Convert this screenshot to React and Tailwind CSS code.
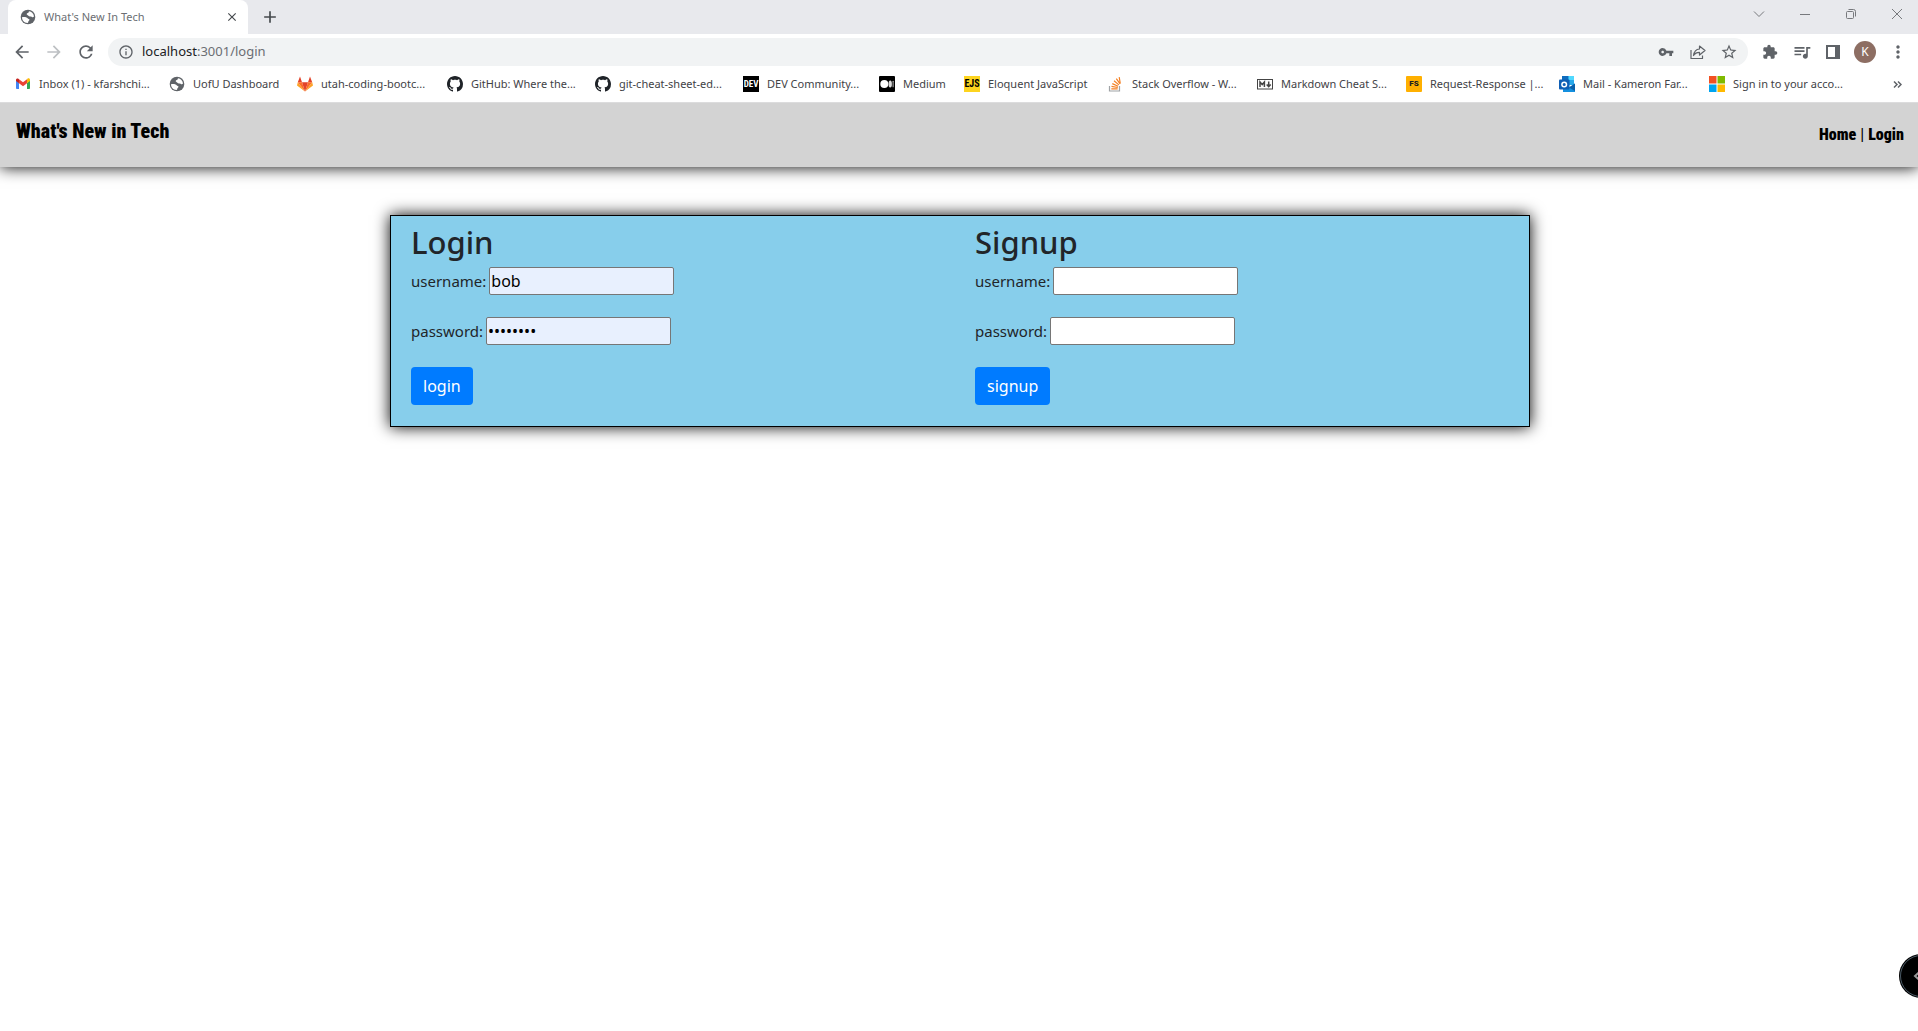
import React from "react";
import {
  MdArrowBack, MdArrowForward, MdRefresh, MdInfoOutline, MdVpnKey,
  MdStarBorder, MdExtension, MdQueueMusic, MdMoreVert, MdClose, MdAdd,
} from "react-icons/md";

const ICON = "size-4 shrink-0";

const Gmail = () => (
  <svg className={ICON} viewBox="0 0 16 16" aria-hidden="true">
    <path d="M1 4v8.200c0 .5.4.8.8.8H4V7z" fill="#4285f4" />
    <path d="M15 4v8.200c0 .5-.4.8-.8.8H12V7z" fill="#34a853" />
    <path d="M12 3.400V7.200l3-2.200V3.800c0-1.300-1.400-2-2.400-1.200z" fill="#fbbc04" />
    <path d="M4 7.200V3.200l4 3 4-3v4L8 10.200z" fill="#ea4335" />
    <path d="M1 3.800V5l3 2.200V3.200l-.6-.5C2.400 2 1 2.600 1 3.800z" fill="#c5221f" />
  </svg>
);
const Globe = () => (
  <svg className={ICON} viewBox="0 0 16 16" aria-hidden="true">
    <circle cx="8" cy="8" r="7.300" fill="#5f6368" />
    <path d="M9 2.200c2.700.4 4.700 2.500 5 5.300-.6.900-1.500 1-2.200.4-.5-.5-1.200-.4-1.900-.4-1.200 0-1.500-.8-2.200-1.200-.8-.4-1.300-1-.8-1.700.4-.6 1.400-.3 1.700-1 .2-.5 0-1 .4-1.400z" fill="#fff" />
    <path d="M2 8.200c1.500-.2 3.200-.2 4.500.3 1 .4 1.300 1.300 2.300 1.500.8.200.9 1 .3 1.500-.6.400-.9 1-.9 1.700 0 .4-.3.800-.8.800C4.300 13.700 2 11.400 2 8.200z" fill="#fff" />
  </svg>
);
const Gitlab = () => (
  <svg className={ICON} viewBox="0 0 16 16" aria-hidden="true">
    <path d="M5 6.300 3 .5.800 6.300zM11 6.300l2-5.800 2.200 5.800z" fill="#e24329" />
    <path d="M.8 6.300 0 9.500l8 6zM15.200 6.300 16 9.500l-8 6z" fill="#fca326" />
    <path d="M.8 6.300H5l3 9.200zM15.200 6.300H11l-3 9.200z" fill="#fc6d26" />
    <path d="M5 6.300h6l-3 9.200z" fill="#e24329" />
  </svg>
);
const Github = () => (
  <svg className={ICON} viewBox="0 0 16 16" fill="#1f2328" aria-hidden="true">
    <path d="M8 0C3.58 0 0 3.58 0 8c0 3.54 2.29 6.53 5.47 7.59.4.07.55-.17.55-.38 0-.19-.01-.82-.01-1.490-2.010.37-2.530-.49-2.690-.94-.09-.23-.48-.94-.82-1.130-.28-.15-.68-.52-.01-.53.63-.01 1.080.58 1.230.82.72 1.210 1.870.87 2.330.66.07-.52.28-.87.51-1.070-1.780-.2-3.640-.89-3.640-3.950 0-.87.31-1.590.82-2.150-.08-.2-.36-1.020.08-2.120 0 0 .67-.21 2.200.82.64-.18 1.320-.27 2-.27s1.360.09 2 .27c1.530-1.040 2.200-.82 2.200-.82.44 1.100.16 1.920.08 2.120.51.56.82 1.270.82 2.150 0 3.070-1.870 3.750-3.650 3.950.29.25.54.73.54 1.480 0 1.070-.01 1.930-.01 2.200 0 .21.15.46.55.38A8.010 8.010 0 0 0 16 8c0-4.420-3.580-8-8-8z" />
  </svg>
);
const Dev = () => (
  <span className="flex size-4 shrink-0 items-center justify-center bg-black font-['Liberation_Sans_Narrow','Roboto_Condensed','Roboto'] text-[9px] leading-none font-bold text-white">DEV</span>
);
const Medium = () => (
  <svg className={ICON} viewBox="0 0 16 16" aria-hidden="true">
    <rect width="16" height="16" rx="1" fill="#000" />
    <circle cx="5.300" cy="8" r="4" fill="#fff" />
    <ellipse cx="11.200" cy="8" rx="1.700" ry="3.600" fill="#ddd" />
    <rect x="13.600" y="4.800" width="1" height="6.400" rx=".5" fill="#bbb" />
  </svg>
);
const Ejs = () => (
  <span className="flex size-4 shrink-0 items-center justify-center bg-[#fdd41f] font-['Liberation_Sans_Narrow','Roboto_Condensed','Roboto'] text-[10px] leading-none font-bold text-black">EJS</span>
);
const StackOverflow = () => (
  <svg className={ICON} viewBox="0 0 16 16" fill="none" aria-hidden="true">
    <path d="M1.500 10v5h10v-5" stroke="#a0a3a6" strokeWidth="1.200" />
    <path d="M3.300 12.800h6.400M3.500 10.300l6.300 1.200M4.300 7.600l5.800 2.700M6 4.800l4.900 4.100M8.300 2.700l3.800 5.100M11.200 1.200l1.100 6.300" stroke="#f48024" strokeWidth="1.200" />
  </svg>
);
const Markdown = () => (
  <svg className={ICON} viewBox="0 0 16 16" fill="none" stroke="#444" aria-hidden="true">
    <rect x=".5" y="3.500" width="15" height="9.500" />
    <path d="M3 11V6l2.200 2.600L7.400 6v5M11.700 5.500v5M9.700 8.400l2 2.300 2-2.300" strokeWidth="1.500" />
  </svg>
);
const FullStack = () => (
  <span className="flex size-4 shrink-0 items-center justify-center rounded-[1px] bg-[#ffb000] font-['Roboto'] text-[8px] leading-none font-black text-[#222]">FS</span>
);
const Outlook = () => (
  <svg className={ICON} viewBox="0 0 16 16" aria-hidden="true">
    <path d="M3 0h12v9H3z" fill="#28a8ea" />
    <path d="M3 0h6v4H3z" fill="#0f6cbd" />
    <path d="M10 0h5v4h-5z" fill="#50d9ff" />
    <path d="M4 16h12V7.500l-6 4-6-4z" fill="#1490df" />
    <path d="M16 7.500V15l-6-3.600z" fill="#0a5ea8" />
    <rect y="3.500" width="10.500" height="10" rx="1" fill="#0f5fb5" />
    <circle cx="5.200" cy="8.500" r="2.300" fill="none" stroke="#fff" strokeWidth="1.500" />
  </svg>
);
const Microsoft = () => (
  <svg className={ICON} viewBox="0 0 16 16" aria-hidden="true">
    <path d="M0 0h7.500v7.500H0z" fill="#f25022" />
    <path d="M8.500 0H16v7.500H8.500z" fill="#7fba00" />
    <path d="M0 8.500h7.500V16H0z" fill="#00a4ef" />
    <path d="M8.500 8.500H16V16H8.500z" fill="#ffb900" />
  </svg>
);

const bookmarks = [
  { label: "Inbox (1) - kfarshchi...", icon: Gmail, width: "w-[154px]" },
  { label: "UofU Dashboard", icon: Globe, width: "w-32" },
  { label: "utah-coding-bootc...", icon: Gitlab, width: "w-[150px]" },
  { label: "GitHub: Where the...", icon: Github, width: "w-[148px]" },
  { label: "git-cheat-sheet-ed...", icon: Github, width: "w-[148px]" },
  { label: "DEV Community...", icon: Dev, width: "w-[136px]" },
  { label: "Medium", icon: Medium, width: "w-[85px]" },
  { label: "Eloquent JavaScript", icon: Ejs, width: "w-[144px]" },
  { label: "Stack Overflow - W...", icon: StackOverflow, width: "w-[149px]" },
  { label: "Markdown Cheat S...", icon: Markdown, width: "w-[149px]" },
  { label: "Request-Response |...", icon: FullStack, width: "w-[153px]" },
  { label: "Mail - Kameron Far...", icon: Outlook, width: "w-[150px]" },
  { label: "Sign in to your acco...", icon: Microsoft, width: "w-[150px]" },
];

function TabStrip() {
  return (
    <div className="flex h-[34px] bg-[#e8e9ed] pl-2">
      <div className="flex w-60 items-center rounded-t-lg bg-white pr-[9px] pl-3">
        <Globe />
        <span className="ml-2 flex-1 text-[11px] text-[#6b6e73]">What's New In Tech</span>
        <button aria-label="Close tab"><MdClose className="size-[14px] text-[#45494d]" /></button>
      </div>
      <button aria-label="New tab" className="ml-3"><MdAdd className="size-5 text-[#45494d]" /></button>
      <div className="ml-auto flex h-7 items-center gap-1 text-[#77797d]">
        <button aria-label="Search tabs" className="flex w-[42px] justify-center">
          <svg className="size-3" viewBox="0 0 12 12" fill="none" stroke="currentColor"><path d="M1 3.500l5 5 5-5" /></svg>
        </button>
        <button aria-label="Minimize" className="flex w-[42px] justify-center">
          <svg className="size-3" viewBox="0 0 12 12" stroke="currentColor"><path d="M1 6.500h10" /></svg>
        </button>
        <button aria-label="Restore" className="flex w-[42px] justify-center">
          <svg className="size-3" viewBox="0 0 12 12" fill="none" stroke="currentColor">
            <rect x="1.500" y="3.500" width="7" height="7" rx="1" />
            <path d="M3.500 1.500h5a2 2 0 0 1 2 2v5" />
          </svg>
        </button>
        <button aria-label="Close window" className="flex w-[42px] justify-center">
          <svg className="size-3" viewBox="0 0 12 12" stroke="currentColor"><path d="M1 1l10 10M11 1L1 11" /></svg>
        </button>
      </div>
    </div>
  );
}

function Toolbar() {
  return (
    <div className="flex h-9 items-center pr-[10px] pl-3 text-[#5f6368]">
      <button aria-label="Back"><MdArrowBack className="size-5" /></button>
      <button aria-label="Forward" className="ml-3 text-[#bdc0c3]"><MdArrowForward className="size-5" /></button>
      <button aria-label="Reload" className="ml-3"><MdRefresh className="size-5" /></button>
      <div className="ml-3 flex h-7 flex-1 items-center rounded-full bg-[#f1f3f4] px-[10px]">
        <MdInfoOutline className="size-4" />
        <a href="#login" className="ml-2 flex-1 text-[13px] text-[#6b6e73]">
          <span className="text-[#202124]">localhost</span>:3001/login
        </a>
        <button aria-label="Saved passwords"><MdVpnKey className="size-4" /></button>
        <button aria-label="Share" className="ml-4">
          <svg className="size-4" viewBox="0 0 16 16" fill="none" stroke="currentColor" strokeWidth="1.200" strokeLinejoin="round">
            <path d="M1 6v8.500h11.500v-3" />
            <path d="M9.500 5V2l5.500 4.500-5.500 4.500V8.300C6.500 8.300 4.800 9.300 3.500 11.500 4 8 6 5.300 9.500 5z" />
          </svg>
        </button>
        <button aria-label="Bookmark this page" className="ml-[14px]"><MdStarBorder className="size-[18px]" /></button>
      </div>
      <button aria-label="Extensions" className="ml-[14px]"><MdExtension className="size-4" /></button>
      <button aria-label="Media" className="ml-[14px]"><MdQueueMusic className="size-5" /></button>
      <button aria-label="Side panel" className="ml-[14px]">
        <svg className="size-[14px]" viewBox="0 0 14 14" fill="none" stroke="currentColor" strokeWidth="2">
          <path d="M1 1h12v12H1z" /><path d="M11 1v12" strokeWidth="4" />
        </svg>
      </button>
      <button aria-label="Profile" className="ml-[14px] flex size-[22px] items-center justify-center rounded-full bg-[#8d6e63] text-xs text-white">K</button>
      <button aria-label="Menu" className="ml-3"><MdMoreVert className="size-5" /></button>
    </div>
  );
}

function BookmarksBar() {
  return (
    <div className="flex h-[33px] items-center border-b border-[#dcdcdd] pr-4 pb-1 pl-[15px]">
      {bookmarks.map(({ label, icon: Icon, width }) => (
        <a key={label} href="#bookmark" className={`flex shrink-0 items-center gap-2 text-[11px] whitespace-nowrap text-[#3f4246] ${width}`}>
          <Icon />
          {label}
        </a>
      ))}
      <button aria-label="More bookmarks" className="ml-auto">
        <svg className="size-[9px]" viewBox="0 0 9 9" fill="none" stroke="#5f6368" strokeWidth="1.500">
          <path d="M1 1.500l3 3-3 3M5 1.500l3 3-3 3" />
        </svg>
      </button>
    </div>
  );
}

function CredentialForm({ title, action, user, pass, fill }) {
  const id = title.toLowerCase();
  const field = `h-7 w-[185px] rounded-[2px] border border-[#767676] px-px text-base text-black ${fill}`;
  return (
    <form className="flex flex-1 flex-col items-start px-[15px] pt-1" onSubmit={(e) => e.preventDefault()}>
      <h2 className="mb-2 text-[31px] leading-[34px] font-medium">{title}</h2>
      <div className="mb-[22px] flex items-center gap-[3px]">
        <label htmlFor={`${id}-username`}>username:</label>
        <input id={`${id}-username`} type="text" defaultValue={user} className={field} />
      </div>
      <div className="mb-[22px] flex items-center gap-[3px]">
        <label htmlFor={`${id}-password`}>password:</label>
        <input id={`${id}-password`} type="password" defaultValue={pass} className={field} />
      </div>
      <button type="submit" className="mb-4 h-[38px] rounded bg-[#007bff] px-3 text-base text-white">{action}</button>
    </form>
  );
}

export default function App() {
  return (
    <div className="min-h-screen overflow-hidden bg-white font-['Noto_Sans','Open_Sans',sans-serif]">
      <div className="relative z-10 bg-white">
        <TabStrip />
        <Toolbar />
        <BookmarksBar />
      </div>
      <header className="flex h-16 items-start justify-between bg-[#d3d3d3] px-4 pt-[14px] font-['Impact','Roboto_Condensed','Liberation_Sans_Narrow','Liberation_Sans',sans-serif] text-black shadow-[0_0_15px_#000]">
        <h1 className="text-xl leading-7 font-black">What's New in Tech</h1>
        <nav className="mt-1 -mr-[2px] flex gap-1 text-base leading-7 font-black">
          <a href="#home">Home</a>
          <span className="font-normal">|</span>
          <a href="#login">Login</a>
        </nav>
      </header>
      <div className="pt-12 pl-[2px]">
        <main className="mx-auto flex max-w-[1140px] border border-black bg-[#87ceeb] p-[5px] text-[15px] text-[#212529] shadow-[0_0_15px_#000]">
          <CredentialForm title="Login" action="login" user="bob" pass="password" fill="bg-[#e8f0fe]" />
          <CredentialForm title="Signup" action="signup" user="" pass="" fill="bg-white" />
        </main>
      </div>
      <button aria-label="Open panel" className="fixed -right-6 bottom-[34px] flex size-[42px] items-center rounded-full border border-[#4a5a66] bg-black pl-3 ring-1 ring-black">
        <svg className="size-3" viewBox="0 0 12 12" fill="none" stroke="#999" strokeWidth="2"><path d="M7 1.500L2 6l5 4.500" /></svg>
      </button>
    </div>
  );
}
